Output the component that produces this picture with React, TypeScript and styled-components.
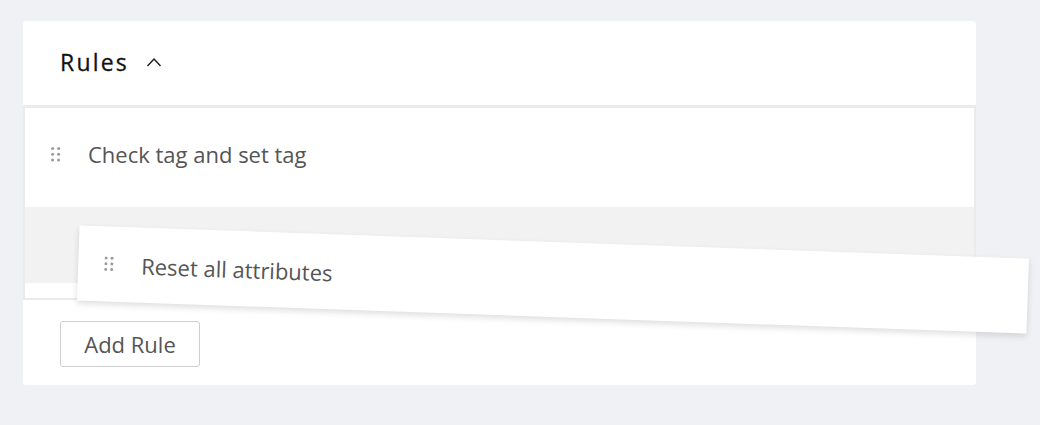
import React from 'react';
import styled, { createGlobalStyle } from 'styled-components';

const GlobalStyle = createGlobalStyle`
  body {
    margin: 0;
    background: #f0f1f5;
    font-family: "Open Sans", "Noto Sans", sans-serif;
  }
`;

const Page = styled.div`
  padding: 21px 64px 40px 23px;
`;

const Card = styled.section`
  width: 953px;
  background: #ffffff;
  border-radius: 3px;
`;

const Header = styled.header`
  height: 84px;
  display: flex;
  align-items: center;
  gap: 17px;
  padding: 0 0 3px 37px;
  box-sizing: border-box;
`;

const Title = styled.h2`
  margin: 0;
  font-size: 23px;
  font-weight: 400;
  letter-spacing: 2.2px;
  color: #111111;
  -webkit-text-stroke: 0.3px #111111;
`;

const List = styled.div`
  border: 2px solid #ebebeb;
  border-top-width: 3px;
`;

const Row = styled.div<{ $dragging?: boolean }>`
  height: ${p => (p.$dragging ? 75 : 99)}px;
  display: flex;
  align-items: center;
  padding: 0 0 ${p => (p.$dragging ? 0 : 7)}px 26px;
  background: #ffffff;
  box-sizing: border-box;
  ${p =>
    p.$dragging &&
    `
    position: absolute;
    top: 34.5px;
    left: 52.5px;
    width: 950px;
    transform: rotate(2deg);
    box-shadow: 0 3px 6px rgba(0, 0, 0, 0.13);
    z-index: 2;
  `}
`;

const Label = styled.span`
  margin-left: 27px;
  font-size: 22px;
  color: #555555;
`;

const Placeholder = styled.div`
  position: relative;
  height: 91px;
  background: linear-gradient(#f2f2f2 0 76px, #ffffff 76px);
`;

const Footer = styled.div`
  padding: 21px 0 18px 37px;
`;

const AddButton = styled.button`
  width: 140px;
  height: 46px;
  padding: 0 0 1px;
  background: #ffffff;
  border: 1px solid #cfcfcf;
  border-radius: 3px;
  font-family: "Open Sans", "Noto Sans", sans-serif;
  font-size: 22px;
  color: #555555;
  cursor: pointer;
`;

const Handle = () => (
  <svg width="10" height="15" viewBox="0 0 10 15">
    {[1.6, 7.6].map(x =>
      [1.6, 7.3, 13].map(y => <circle key={`${x}-${y}`} cx={x} cy={y} r="1.5" fill="#9b9b9b" />)
    )}
  </svg>
);

const Chevron = () => (
  <svg width="16" height="10" viewBox="0 0 16 10">
    <polyline points="1.5,9 8,2 14.5,9" fill="none" stroke="#222" strokeWidth="1.5" />
  </svg>
);

const App: React.FC = () => (
  <Page>
    <GlobalStyle />
    <Card>
      <Header>
        <Title>Rules</Title>
        <Chevron />
      </Header>
      <List>
        <Row>
          <Handle />
          <Label>Check tag and set tag</Label>
        </Row>
        <Placeholder>
          <Row $dragging>
            <Handle />
            <Label>Reset all attributes</Label>
          </Row>
        </Placeholder>
      </List>
      <Footer>
        <AddButton>Add Rule</AddButton>
      </Footer>
    </Card>
  </Page>
);

export default App;
